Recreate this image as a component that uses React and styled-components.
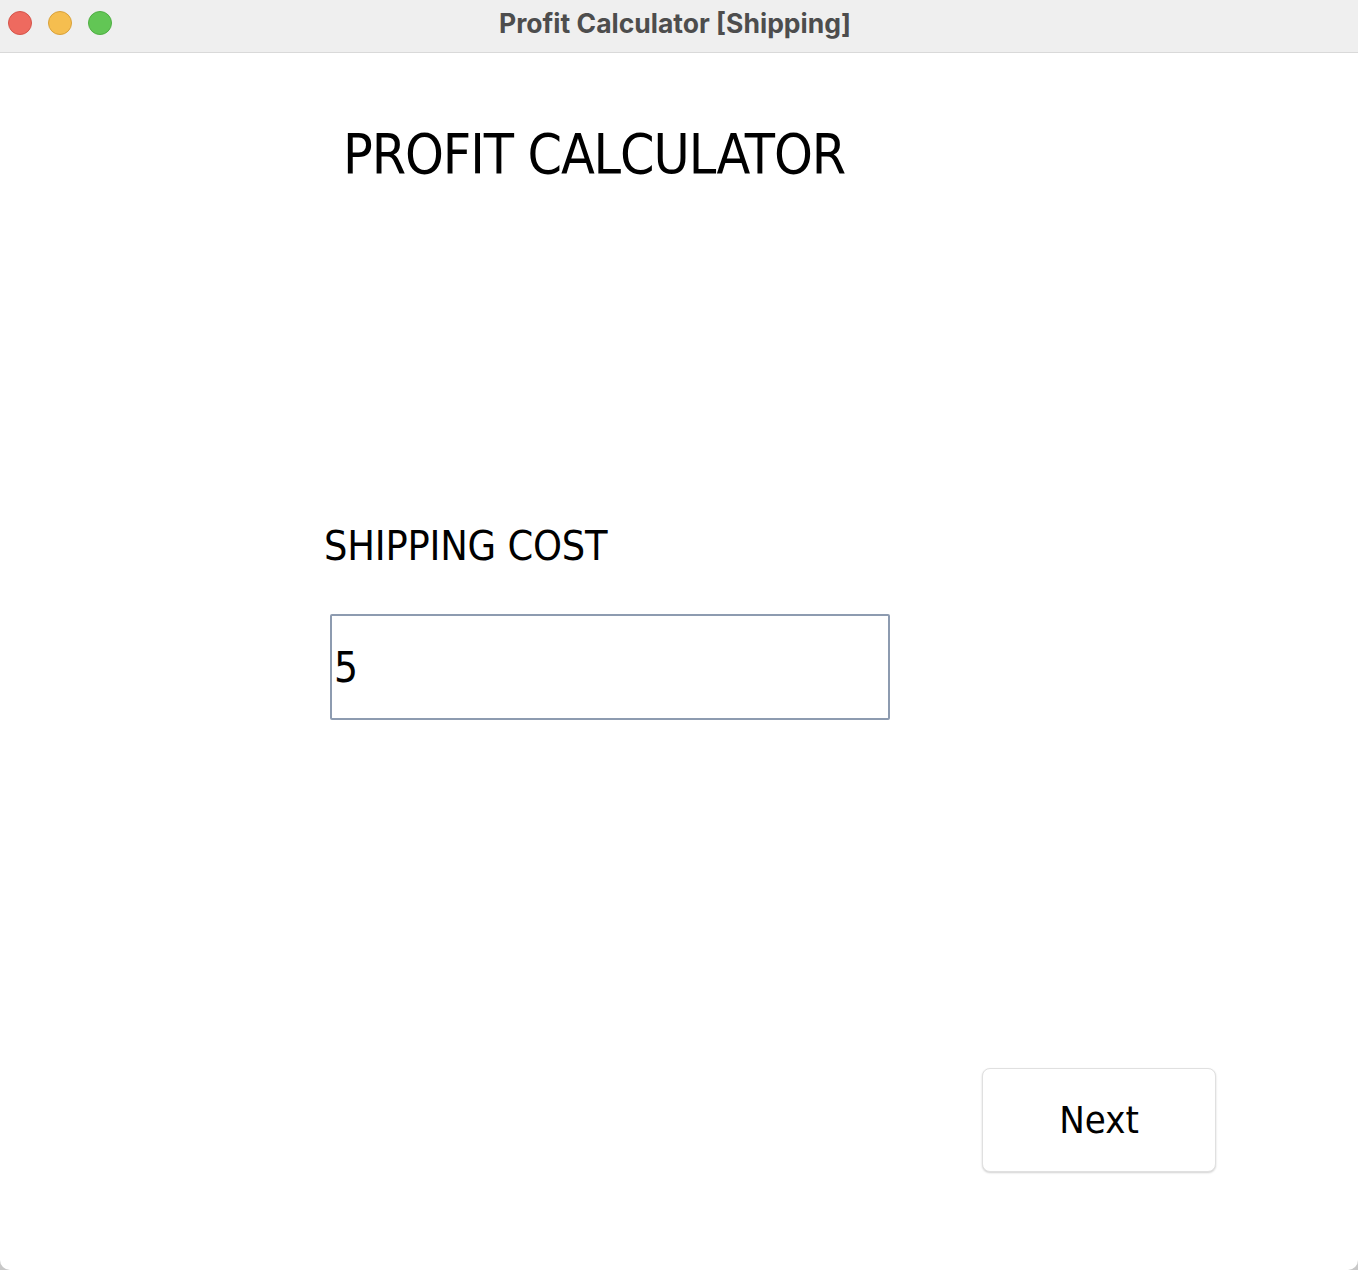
import styled, { createGlobalStyle } from "styled-components";

const GlobalStyle = createGlobalStyle`
  html, body {
    margin: 0;
    padding: 0;
    background: #c8c8c8;
  }
  #root {
    min-height: 100vh;
  }
`;

export default function App() {
  return (
    <>
      <GlobalStyle />
      <Window>
        <TitleBar>
          <Lights>
            <Light $color="#ee6a5f" $edge="#d5544a" />
            <Light $color="#f5be4f" $edge="#d9a13a" />
            <Light $color="#62c655" $edge="#4fae43" />
          </Lights>
          <WindowTitle>Profit Calculator [Shipping]</WindowTitle>
        </TitleBar>

        <Content>
          <Heading>PROFIT CALCULATOR</Heading>

          <Field>
            <Label htmlFor="shipping">SHIPPING COST</Label>
            <Input id="shipping" defaultValue="5" />
          </Field>

          <Footer>
            <NextButton type="button">Next</NextButton>
          </Footer>
        </Content>
      </Window>
    </>
  );
}

const Window = styled.div`
  width: 1358px;
  height: 1270px;
  display: flex;
  flex-direction: column;
  background: #ffffff;
  border-radius: 0 0 10px 10px;
  overflow: hidden;
  font-family: "DejaVu Sans Condensed", "DejaVu Sans", sans-serif;
  font-stretch: condensed;
  color: #000;
`;

const TitleBar = styled.div`
  position: relative;
  height: 52px;
  flex-shrink: 0;
  display: flex;
  align-items: center;
  justify-content: center;
  background: #efefef;
  border-bottom: 1px solid #d9d9d9;
`;

const Lights = styled.div`
  position: absolute;
  left: 8px;
  top: 11px;
  display: flex;
  gap: 16px;
`;

const Light = styled.span`
  width: 24px;
  height: 24px;
  border-radius: 50%;
  box-sizing: border-box;
  background: ${(p) => p.$color};
  border: 1px solid ${(p) => p.$edge};
`;

const WindowTitle = styled.div`
  font-family: Inter, "Liberation Sans", sans-serif;
  font-stretch: normal;
  font-weight: 700;
  font-size: 26.5px;
  line-height: 30px;
  color: #4d4d4d;
  margin-left: -8px;
  margin-top: -6px;
`;

const Content = styled.div`
  flex: 1;
  display: flex;
  flex-direction: column;
`;

const Heading = styled.h1`
  margin: 74px 0 0 343px;
  font-size: 55px;
  line-height: 55px;
  font-weight: 400;
  letter-spacing: -1.1px;
`;

const Field = styled.div`
  display: flex;
  flex-direction: column;
  align-items: flex-start;
  margin-top: 344px;
`;

const Label = styled.label`
  margin-left: 324px;
  font-size: 41px;
  line-height: 41px;
  letter-spacing: -0.2px;
`;

const Input = styled.input`
  box-sizing: border-box;
  margin: 47px 0 0 330px;
  width: 560px;
  height: 106px;
  padding: 0 2px;
  border: 2px solid #8d9bb0;
  border-radius: 2px;
  font-family: inherit;
  font-stretch: condensed;
  font-size: 42px;
  color: #000;
  outline: none;
`;

const Footer = styled.div`
  flex: 1;
  display: flex;
  justify-content: flex-end;
  align-items: flex-end;
  padding: 0 142px 98px 0;
`;

const NextButton = styled.button`
  width: 234px;
  height: 104px;
  background: #fff;
  border: 1px solid #e0e0e0;
  border-radius: 8px;
  box-shadow: 0 1px 2px rgba(0, 0, 0, 0.18);
  font-family: inherit;
  font-stretch: condensed;
  font-size: 38px;
  color: #000;
`;
